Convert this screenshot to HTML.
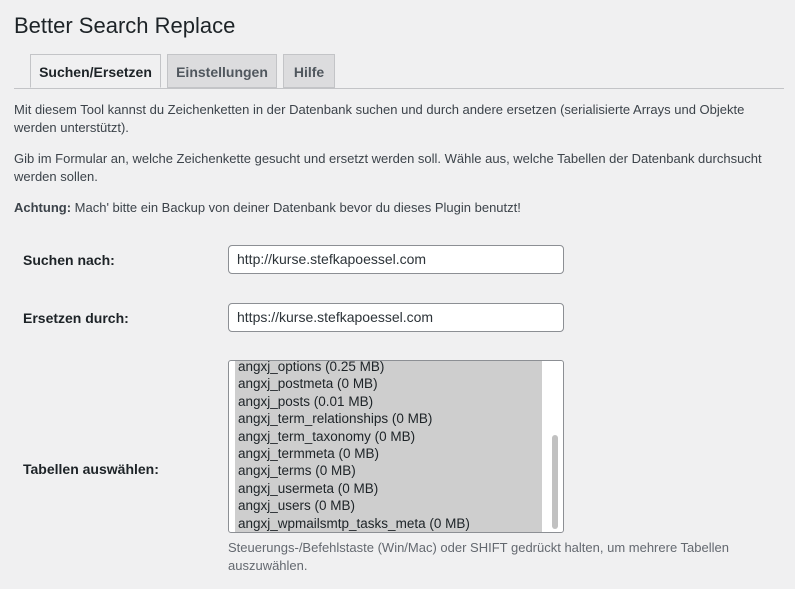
<!DOCTYPE html>
<html><head><meta charset="utf-8"><style>
body{margin:0;background:#f0f0f1;font-family:"Liberation Sans",sans-serif;color:#3c434a;width:795px;height:589px;overflow:hidden;position:relative}
.a{position:absolute;white-space:nowrap}
h1{position:absolute;left:14px;top:13px;margin:0;font-size:22px;font-weight:400;color:#1d2327}
.tab{position:absolute;top:54px;height:34px;box-sizing:border-box;border:1px solid #c3c4c7;background:#dcdcde;font-weight:bold;font-size:14px;color:#50575e;line-height:34px;text-align:center}
p{position:absolute;left:14px;margin:0;font-size:13px;line-height:18px;width:770px;color:#3c434a}
.lab{position:absolute;left:23px;font-weight:bold;font-size:14px;color:#1d2327}
.in{position:absolute;left:228px;width:336px;height:29px;box-sizing:border-box;border:1px solid #8c8f94;border-radius:4px;background:#fff;font-size:14px;padding:0 8px;line-height:27px;color:#2c3338}
</style></head><body>
<h1>Better Search Replace</h1>
<div class="a" style="left:14px;top:88px;width:770px;height:1px;background:#c3c4c7"></div>
<div class="tab" style="left:30px;width:131px;background:#f0f0f1;border-bottom-color:#f0f0f1;color:#1d2327">Suchen/Ersetzen</div>
<div class="tab" style="left:167px;width:110px">Einstellungen</div>
<div class="tab" style="left:283px;width:52px">Hilfe</div>
<p style="top:101px">Mit diesem Tool kannst du Zeichenketten in der Datenbank suchen und durch andere ersetzen (serialisierte Arrays und Objekte werden unterstützt).</p>
<p style="top:150px">Gib im Formular an, welche Zeichenkette gesucht und ersetzt werden soll. Wähle aus, welche Tabellen der Datenbank durchsucht werden sollen.</p>
<p style="top:199px"><b>Achtung:</b> Mach' bitte ein Backup von deiner Datenbank bevor du dieses Plugin benutzt!</p>
<div class="lab" style="top:252px">Suchen nach:</div>
<div class="in" style="top:245px">http://kurse.stefkapoessel.com</div>
<div class="lab" style="top:310px">Ersetzen durch:</div>
<div class="in" style="top:303px">https://kurse.stefkapoessel.com</div>
<div class="lab" style="top:461px">Tabellen auswählen:</div>
<div class="a" style="left:228px;top:360px;width:336px;height:173px;box-sizing:border-box;border:1px solid #8c8f94;border-radius:3px;background:#fff;overflow:hidden">
<div style="position:absolute;left:6px;top:0;width:307px;height:172px;background:#cecece"></div>
<div style="position:absolute;left:323px;top:74px;width:6px;height:94px;border-radius:3px;background:#c1c1c1"></div>
<div style="position:absolute;left:9px;top:-3px;font-size:13.5px;line-height:17.4px;color:#1d2327">
angxj_options (0.25 MB)<br>angxj_postmeta (0 MB)<br>angxj_posts (0.01 MB)<br>angxj_term_relationships (0 MB)<br>angxj_term_taxonomy (0 MB)<br>angxj_termmeta (0 MB)<br>angxj_terms (0 MB)<br>angxj_usermeta (0 MB)<br>angxj_users (0 MB)<br>angxj_wpmailsmtp_tasks_meta (0 MB)</div></div>
<div class="a" style="left:228px;top:539px;font-size:13px;line-height:18px;color:#646970">Steuerungs-/Befehlstaste (Win/Mac) oder SHIFT gedrückt halten, um mehrere Tabellen<br>auszuwählen.</div>
</body></html>
